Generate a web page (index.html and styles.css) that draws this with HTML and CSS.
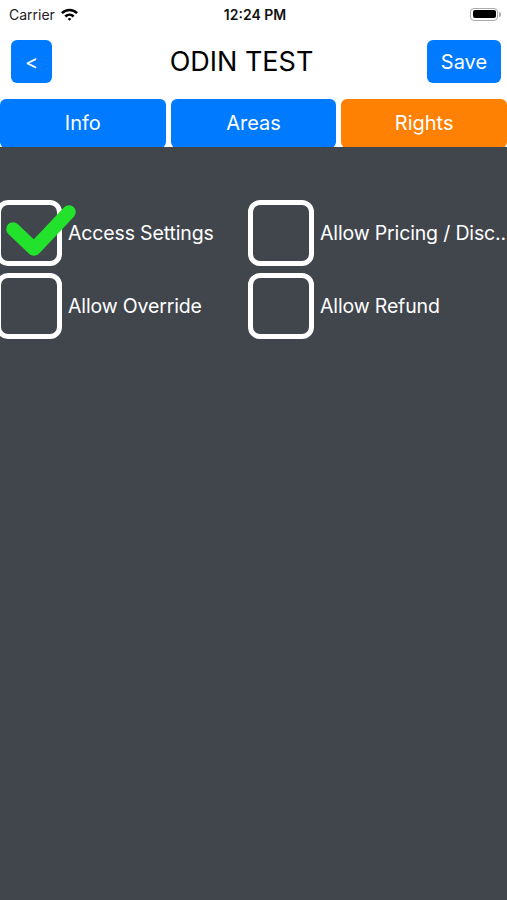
FILE: index.html
```html
<!DOCTYPE html>
<html lang="en">
<head>
    <meta charset="UTF-8">
    <meta name="viewport" content="width=device-width, initial-scale=1.0">
    <title>ODIN TEST</title>
    <link rel="stylesheet" href="styles.css">
</head>
<body>
    <div class="screen">
        <!-- Status Bar -->
        <div class="status-bar">
            <div class="carrier">
                Carrier
                <svg class="wifi" width="19" height="14" viewBox="0 0 19 14">
                    <path d="M1 5.2 A12 12 0 0 1 18 5.2 L16.2 7 A9.5 9.5 0 0 0 2.8 7 Z" fill="#000"/>
                    <path d="M4.4 8.6 A7.3 7.3 0 0 1 14.6 8.6 L12.8 10.4 A4.8 4.8 0 0 0 6.2 10.4 Z" fill="#000"/>
                    <path d="M7.7 11.9 A2.6 2.6 0 0 1 11.3 11.9 L9.5 13.7 Z" fill="#000"/>
                </svg>
            </div>
            <div class="time">12:24 PM</div>
            <div class="battery">
                <div class="battery-body"><div class="battery-fill"></div></div>
                <div class="battery-tip"></div>
            </div>
        </div>

        <!-- Navigation -->
        <div class="nav">
            <button class="btn back">&lt;</button>
            <div class="title">ODIN TEST</div>
            <button class="btn save">Save</button>
        </div>

        <!-- Tabs -->
        <div class="tabs">
            <button class="tab">Info</button>
            <button class="tab">Areas</button>
            <button class="tab active">Rights</button>
        </div>

        <!-- Rights List -->
        <div class="content">
            <div class="rights">
                <div class="right">
                    <div class="box">
                        <svg class="check" width="76" height="64" viewBox="0 0 76 64">
                            <polyline points="10,29 31,49 66,12" fill="none" stroke="#22e22b" stroke-width="13.5" stroke-linecap="round" stroke-linejoin="round"/>
                        </svg>
                    </div>
                    <span class="label">Access Settings</span>
                </div>
                <div class="right">
                    <div class="box"></div>
                    <span class="label">Allow Pricing / Disc..</span>
                </div>
                <div class="right">
                    <div class="box"></div>
                    <span class="label">Allow Override</span>
                </div>
                <div class="right">
                    <div class="box"></div>
                    <span class="label">Allow Refund</span>
                </div>
            </div>
        </div>
    </div>
</body>
</html>
```

FILE: styles.css
```css
* {
    box-sizing: border-box;
    margin: 0;
    padding: 0;
    font-family: Inter, "Noto Sans", sans-serif;
}
body {
    background-color: #fff;
}
.screen {
    display: flex;
    flex-direction: column;
    width: 507px;
    height: 900px;
    overflow: hidden;
}
.status-bar {
    display: flex;
    align-items: center;
    justify-content: space-between;
    height: 28px;
    padding: 0 6px 0 9px;
}
.carrier {
    display: flex;
    align-items: center;
    gap: 5px;
    font-size: 14px;
    color: #222;
    width: 120px;
}
.time {
    font-size: 14px;
    font-weight: 600;
    color: #111;
}
.battery {
    display: flex;
    align-items: center;
    justify-content: flex-end;
    width: 120px;
}
.battery-body {
    width: 28px;
    height: 13px;
    border: 1px solid #aaa;
    border-radius: 4px;
    padding: 1.5px;
}
.battery-fill {
    width: 100%;
    height: 100%;
    background-color: #000;
    border-radius: 2px;
}
.battery-tip {
    width: 2px;
    height: 5px;
    margin-left: 1px;
    background-color: #aaa;
    border-radius: 0 2px 2px 0;
}
.nav {
    display: flex;
    align-items: center;
    justify-content: space-between;
    height: 43px;
    margin-top: 12px;
    padding: 0 6px 0 11px;
}
.btn {
    height: 43px;
    border: none;
    border-radius: 6px;
    background-color: #007aff;
    color: #fff;
    font-size: 20px;
    cursor: pointer;
}
.btn.back {
    width: 41px;
}
.btn.save {
    width: 74px;
}
.title {
    font-size: 27px;
    color: #000;
    margin-left: 4px;
}
.tabs {
    display: grid;
    grid-template-columns: repeat(3, 1fr);
    gap: 5px;
    margin-top: 16px;
    height: 49px;
}
.tab {
    border: none;
    border-radius: 6px;
    background-color: #007aff;
    color: #fff;
    font-size: 20px;
    padding-bottom: 2px;
    cursor: pointer;
}
.tab.active {
    background-color: #ff8103;
}
.content {
    flex: 1;
    margin-top: -1px;
    background-color: #41464d;
    padding-top: 53px;
}
.rights {
    display: grid;
    grid-template-columns: 252px 1fr;
    row-gap: 7px;
    margin-left: -4px;
}
.right {
    display: flex;
    align-items: center;
    gap: 6px;
    height: 66px;
    white-space: nowrap;
}
.box {
    position: relative;
    flex: none;
    width: 66px;
    height: 66px;
    border: 5px solid #fff;
    border-radius: 12px;
}
.check {
    position: absolute;
    left: 2px;
    top: -5px;
}
.label {
    color: #fff;
    font-size: 19.5px;
    letter-spacing: -0.15px;
}
```
